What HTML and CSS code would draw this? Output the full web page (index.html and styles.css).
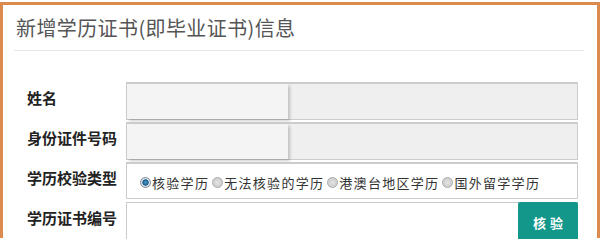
FILE: index.html
```html
<!DOCTYPE html>
<html>
<head>
	<meta charset="utf-8">
	<title>新增学历证书</title>
	<link rel="stylesheet" href="styles.css">
</head>
<body>
<div class="panel">
	<div class="title">新增学历证书(即毕业证书)信息</div>
	<div class="form">
		<div class="row">
			<label class="label">姓名</label>
			<div class="field grey"><span class="fill"></span></div>
		</div>
		<div class="row">
			<label class="label">身份证件号码</label>
			<div class="field grey"><span class="fill"></span></div>
		</div>
		<div class="row">
			<label class="label">学历校验类型</label>
			<div class="field radios">
				<label><input type="radio" name="xllx" checked>核验学历</label>
				<label><input type="radio" name="xllx">无法核验的学历</label>
				<label><input type="radio" name="xllx">港澳台地区学历</label>
				<label><input type="radio" name="xllx">国外留学学历</label>
			</div>
		</div>
		<div class="row last">
			<label class="label">学历证书编号</label>
			<div class="field withbtn">
				<div class="text"></div>
				<button class="btn">核验</button>
			</div>
		</div>
	</div>
</div>
</body>
</html>
```

FILE: styles.css
```css
html, body{
	margin: 0;
	height: 239px;
	overflow: hidden;
}
body{
	font-family: "Noto Sans CJK SC", "Liberation Sans", sans-serif;
	background: #fff;
}
.panel{
	margin-top: 2px;
	width: 600px;
	box-sizing: border-box;
	border: 3px solid #dc8b4f;
	border-bottom: none;
	padding: 0 13px 0 11px;
}
.title{
	height: 45px;
	line-height: 45px;
	font-size: 20px;
	letter-spacing: 0.4px;
	color: #555;
	padding-left: 2px;
	border-bottom: 1px solid #e6e6e6;
}
.form{
	margin-top: 31px;
	padding: 0 6px 0 16px;
}
.row{
	display: grid;
	grid-template-columns: 96px 1fr;
	height: 40px;
}
.row.last{
	height: 36px;
}
.label{
	font-size: 15px;
	font-weight: bold;
	color: #222;
	line-height: 20px;
	padding-top: 6px;
	margin-left: -3px;
}
.field{
	box-sizing: border-box;
	height: 38px;
	border: 1px solid #ccc;
	border-top-width: 2px;
}
.field.grey{
	background: #efefef;
}
.fill{
	display: block;
	width: 161px;
	height: 35px;
	background: #f4f4f4;
	box-shadow: 2px 2px 3px rgba(0,0,0,0.2);
}
.radios{
	display: flex;
	align-items: center;
	padding: 3px 0 0 13px;
	font-size: 13px;
	letter-spacing: 1.3px;
	color: #333;
	background: #fff;
	height: 37px;
}
.radios label{
	display: flex;
	align-items: center;
	margin-right: 3px;
}
.radios input{
	appearance: none;
	-webkit-appearance: none;
	width: 11px;
	height: 11px;
	margin: 0 1px 0 0;
	border-radius: 50%;
	border: 1px solid #a8a8a8;
	background: radial-gradient(circle, #e4e4e4 0, #d0d0d0 60%, #f0f0f0 100%);
	box-sizing: border-box;
}
.radios input:checked{
	border-color: #7a8a99;
	background: radial-gradient(circle, #4aa0d0 0, #1a5a8a 45%, #dfe6ec 55%, #c8d0d8 100%);
}
.withbtn{
	display: flex;
	border-top-width: 1px;
	border-right: none;
	height: 40px;
}
.text{
	flex: 1;
}
.btn{
	width: 60px;
	height: 40px;
	margin: -1px 0 0 0;
	border: none;
	border-radius: 2px 2px 0 0;
	background: #13978a;
	color: #fff;
	font-family: inherit;
	font-size: 13px;
	font-weight: bold;
	letter-spacing: 4px;
	padding: 0 0 0 4px;
}
```
